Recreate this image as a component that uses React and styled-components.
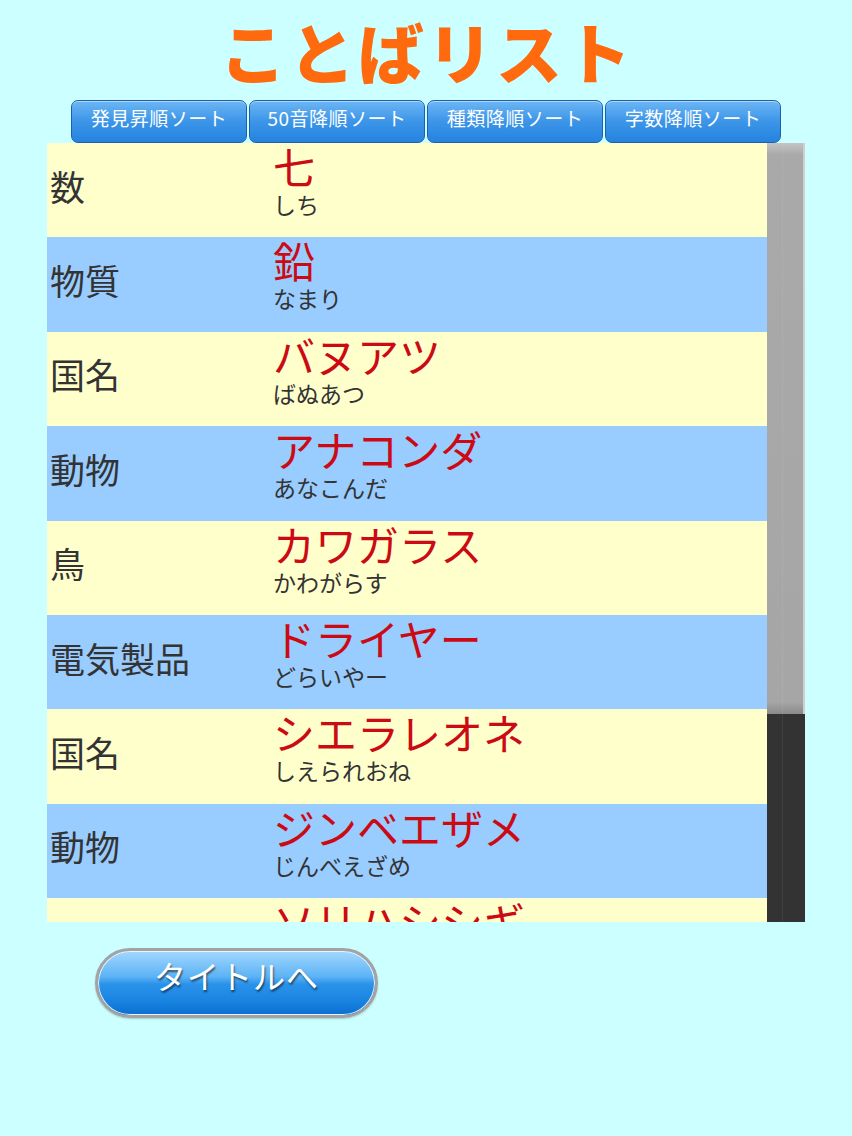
import styled, { createGlobalStyle } from 'styled-components'

const GlobalStyle = createGlobalStyle`
	html, body {
		margin: 0;
		padding: 0;
		background: #ccffff;
	}
	body {
		font-family: 'Noto Sans CJK JP', 'Noto Sans', sans-serif;
	}
`

const words = [
	{ kind: '数', word: '七', yomi: 'しち' },
	{ kind: '物質', word: '鉛', yomi: 'なまり' },
	{ kind: '国名', word: 'バヌアツ', yomi: 'ばぬあつ' },
	{ kind: '動物', word: 'アナコンダ', yomi: 'あなこんだ' },
	{ kind: '鳥', word: 'カワガラス', yomi: 'かわがらす' },
	{ kind: '電気製品', word: 'ドライヤー', yomi: 'どらいやー' },
	{ kind: '国名', word: 'シエラレオネ', yomi: 'しえられおね' },
	{ kind: '動物', word: 'ジンベエザメ', yomi: 'じんべえざめ' },
	{ kind: '鳥', word: 'ソリハシシギ', yomi: 'そりはししぎ' },
]

const sorts = ['発見昇順ソート', '50音降順ソート', '種類降順ソート', '字数降順ソート']

const Page = styled.div`
	width: 852px;
	height: 1136px;
	background: #ccffff;
	display: flex;
	flex-direction: column;
`

const Title = styled.h1`
	margin: 0;
	height: 100px;
	display: flex;
	align-items: center;
	justify-content: center;
	font-family: 'Noto Sans CJK JP', sans-serif;
	font-weight: 900;
	font-size: 66px;
	letter-spacing: 3px;
	color: #ff6a0e;
	padding-left: 2px;
`

const SortBar = styled.div`
	display: flex;
	gap: 2px;
	padding-left: 71px;
	height: 43px;
	position: relative;
	z-index: 1;
`

const SortButton = styled.button`
	width: 176px;
	height: 43px;
	box-sizing: border-box;
	border: 1px solid #1f5fae;
	border-radius: 7px;
	background: linear-gradient(#6cb6f5, #3c95e8 50%, #2583df);
	box-shadow: inset 0 1px 0 rgba(255, 255, 255, 0.45);
	color: #ffffff;
	font-family: 'Noto Sans CJK JP', sans-serif;
	font-size: 19px;
	padding: 0 0 8px;
	letter-spacing: 0.5px;
`

const ListFrame = styled.div`
	display: flex;
	margin-left: 47px;
	width: 758px;
	height: 779px;
`

const Rows = styled.div`
	width: 720px;
	overflow: hidden;
	display: flex;
	flex-direction: column;
`

const Row = styled.div`
	flex: 0 0 94.4px;
	display: flex;
	align-items: center;
	background: ${(p) => (p.$odd ? '#99ccff' : '#ffffcc')};
`

const Kind = styled.div`
	width: 226px;
	padding-left: 3px;
	box-sizing: border-box;
	font-size: 35px;
	color: #333333;
	padding-bottom: 10px;
`

const WordCell = styled.div`
	display: flex;
	flex-direction: column;
	align-self: flex-start;
`

const Word = styled.div`
	font-size: 42px;
	line-height: 46px;
	color: #cc0a14;
`

const Yomi = styled.div`
	font-size: 23px;
	line-height: 30px;
	color: #333333;
`

const ScrollTrack = styled.div`
	width: 38px;
	display: flex;
	flex-direction: column;
	background: #333333;
	position: relative;
	&::after {
		content: '';
		position: absolute;
		top: 0;
		bottom: 0;
		left: 15px;
		width: 1px;
		background: rgba(255, 255, 255, 0.06);
	}
`

const ScrollThumb = styled.div`
	height: 571px;
	background: linear-gradient(#c4c4c4 0px, #a9a9a9 12px, #a6a6a6 calc(100% - 12px), #8a8a8a 100%);
	border-right: 2px solid #cfcfcf;
	box-sizing: border-box;
`

const Footer = styled.div`
	padding: 26px 0 0 95px;
`

const TitleButton = styled.button`
	width: 283px;
	height: 70px;
	box-sizing: border-box;
	border-radius: 35px;
	border: 3px solid #a3a3a3;
	box-shadow: inset 0 0 0 1px #e8f4ff, 0 1px 2px rgba(0, 0, 0, 0.2);
	background: linear-gradient(#a4d8ff 0%, #5cb3f5 40%, #2a92ea 52%, #1b86e2 75%, #0a6fd2 100%);
	color: #ffffff;
	font-family: 'Noto Sans CJK JP', sans-serif;
	font-size: 32px;
	text-shadow: 1px 2px 2px rgba(0, 0, 0, 0.55);
	padding: 0 0 16px;
	letter-spacing: 1px;
`

export default function App() {
	return (
		<>
			<GlobalStyle />
			<Page>
				<Title>ことばリスト</Title>
				<SortBar>
					{sorts.map((s) => (
						<SortButton key={s}>{s}</SortButton>
					))}
				</SortBar>
				<ListFrame>
					<Rows>
						{words.map((w, i) => (
							<Row key={i} $odd={i % 2 === 1}>
								<Kind>{w.kind}</Kind>
								<WordCell>
									<Word>{w.word}</Word>
									<Yomi>{w.yomi}</Yomi>
								</WordCell>
							</Row>
						))}
					</Rows>
					<ScrollTrack>
						<ScrollThumb />
					</ScrollTrack>
				</ListFrame>
				<Footer>
					<TitleButton>タイトルへ</TitleButton>
				</Footer>
			</Page>
		</>
	)
}
